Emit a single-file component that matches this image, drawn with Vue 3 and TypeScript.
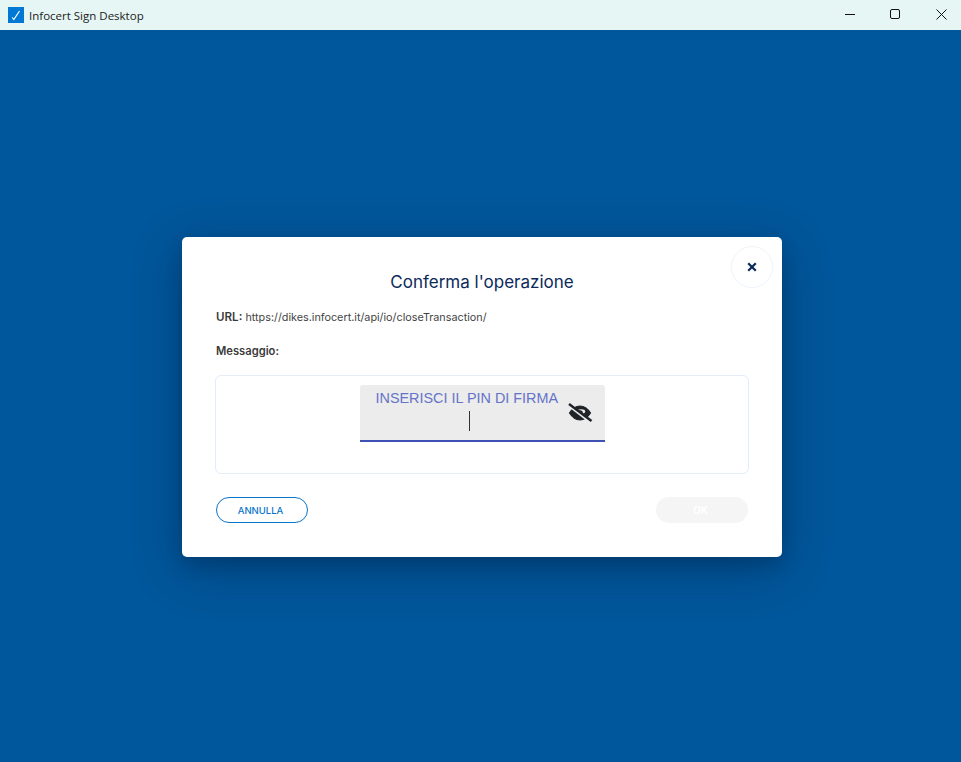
<script setup lang="ts">
const title: string = 'Infocert Sign Desktop'
</script>

<template>
  <div class="window">
    <header class="titlebar">
      <div class="app">
        <svg class="logo" width="16" height="16" viewBox="0 0 16 16">
          <rect width="16" height="16" fill="#0078d4" />
          <path d="M4.2 10.5 L5.8 12.5 L11.5 4" fill="none" stroke="#fff" stroke-width="1.2" />
        </svg>
        <span>{{ title }}</span>
      </div>
      <div class="controls">
        <svg width="46" height="30" viewBox="0 0 46 30"><path d="M22 14.5H32" stroke="#111" stroke-width="1" /></svg>
        <svg width="46" height="30" viewBox="0 0 46 30"><rect x="21.5" y="9.5" width="9" height="9" rx="1.5" fill="none" stroke="#111" stroke-width="1" /></svg>
        <svg width="46" height="30" viewBox="0 0 46 30"><path d="M21.5 9.5L31.5 19.5M31.5 9.5L21.5 19.5" stroke="#111" stroke-width="1" /></svg>
      </div>
    </header>
    <main class="stage">
      <section class="modal">
        <button class="close" type="button" aria-label="Chiudi">
          <svg width="10" height="10" viewBox="0 0 10 10"><path d="M1.2 1.2L8.8 8.8M8.8 1.2L1.2 8.8" stroke="#0b2a5b" stroke-width="2.2" /></svg>
        </button>
        <h1>Conferma l'operazione</h1>
        <p class="url"><b>URL:</b> https://dikes.infocert.it/api/io/closeTransaction/</p>
        <p class="msg"><b>Messaggio:</b></p>
        <div class="box">
          <div class="pin">
            <span class="label">INSERISCI IL PIN DI FIRMA</span>
            <span class="caret"></span>
            <svg class="eye" width="26" height="22" viewBox="0 0 26 22">
              <path d="M2.5 11C5.5 6.3 9 4 13 4S20.5 6.3 23.5 11C20.5 15.7 17 18 13 18S5.5 15.7 2.5 11Z" fill="#1f2328" stroke="#1f2328" stroke-width="1.2" />
              <ellipse cx="14" cy="9.4" rx="4.2" ry="2.2" fill="#ececec" />
              <circle cx="13.2" cy="10.8" r="2.6" fill="#1f2328" />
              <path d="M2 3.2L24 20.2" stroke="#ececec" stroke-width="3.4" />
              <path d="M2 2L24.5 19" stroke="#1f2328" stroke-width="2.4" />
            </svg>
          </div>
        </div>
        <div class="actions">
          <button class="btn cancel" type="button">ANNULLA</button>
          <button class="btn ok" type="button" disabled>OK</button>
        </div>
      </section>
    </main>
  </div>
</template>

<style>
html, body { margin: 0; padding: 0; }
</style>

<style scoped>
.window {
  width: 961px;
  height: 762px;
  display: flex;
  flex-direction: column;
  overflow: hidden;
  font-family: "Inter", "Liberation Sans", sans-serif;
}
.titlebar {
  height: 30px;
  flex: none;
  background: #e6f6f4;
  display: flex;
  align-items: center;
  justify-content: space-between;
}
.app {
  display: flex;
  align-items: center;
  gap: 5px;
  padding-left: 8px;
  font-family: "Open Sans", "Liberation Sans", sans-serif;
  font-size: 11.5px;
  color: #1b1b1b;
}
.controls { display: flex; }
.controls svg { display: block; }
.stage {
  flex: 1;
  background: #01579b;
  display: flex;
  align-items: flex-start;
  justify-content: center;
  padding-top: 207px;
  padding-left: 3px;
}
.modal {
  position: relative;
  box-sizing: border-box;
  width: 600px;
  height: 320px;
  background: #fff;
  border-radius: 5px;
  box-shadow: 0 8px 16px rgba(0, 20, 50, 0.18), 0 12px 50px rgba(0, 20, 50, 0.32);
  padding: 34px 34px 0;
  display: flex;
  flex-direction: column;
}
.close {
  position: absolute;
  top: 9px;
  right: 9px;
  width: 42px;
  height: 42px;
  border-radius: 50%;
  border: 1px solid #edf4fb;
  background: #fff;
  padding: 0;
  display: flex;
  align-items: center;
  justify-content: center;
}
h1 {
  margin: 0;
  font-size: 17px;
  line-height: 22px;
  font-weight: 400;
  text-align: center;
  color: #0b2a5b;
}
p { margin: 0; font-size: 11.2px; line-height: 16px; color: #444; }
p b { font-weight: 600; color: #3a3a3a; }
.url { margin-top: 16px; font-size: 10.8px; }
.url b { font-size: 11.6px; }
.msg { margin-top: 17px; }
.box {
  box-sizing: border-box;
  margin: 16px -1px 0;
  height: 99px;
  border: 1px solid #e3edf7;
  border-radius: 6px;
  display: flex;
  justify-content: center;
  padding-top: 9px;
}
.pin {
  position: relative;
  box-sizing: border-box;
  width: 245px;
  height: 57px;
  background: #ececec;
  border-bottom: 2px solid #3f51b5;
  border-radius: 3px 3px 0 0;
}
.label {
  position: absolute;
  left: 16px;
  top: 5px;
  font-family: "Liberation Sans", Arial, sans-serif;
  font-size: 14.4px;
  line-height: 16px;
  color: #6573c9;
}
.caret {
  position: absolute;
  left: 109px;
  top: 26px;
  width: 1px;
  height: 20px;
  background: #333;
}
.eye { position: absolute; left: 207px; top: 17px; }
.actions {
  display: flex;
  justify-content: space-between;
  margin-top: 23px;
}
.btn {
  width: 92px;
  height: 26px;
  border-radius: 13px;
  font-family: inherit;
  font-size: 9.5px;
  font-weight: 500;
  padding: 0 3px 0 0;
}
.cancel { background: #fff; border: 1px solid #0a74c9; color: #0a74c9; }
.ok { background: #f5f5f5; border: none; color: #fff; font-weight: 700; font-size: 10px; }
</style>
